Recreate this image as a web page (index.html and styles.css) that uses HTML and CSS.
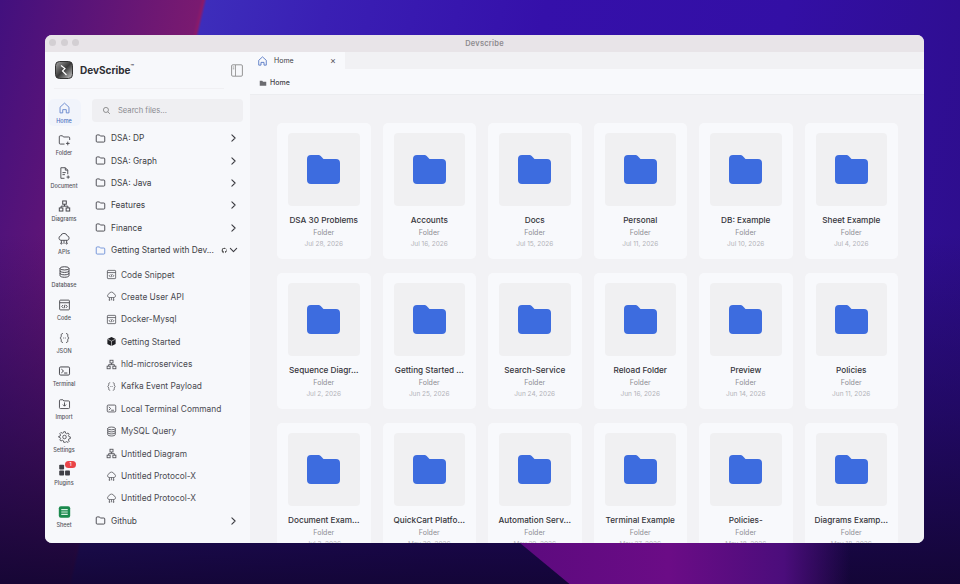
FILE: index.html
```html
<!DOCTYPE html>
<html lang="en">
<head>
<meta charset="utf-8">
<title>DevScribe</title>
<link rel="stylesheet" href="styles.css">
</head>
<body>
<svg class="defs" width="0" height="0" aria-hidden="true">
  <symbol id="i-folder" viewBox="0 0 16 16"><path d="M1.8 4.2a1.4 1.4 0 0 1 1.4-1.4h2.6c.5 0 .9.2 1.2.6l.8 1h5a1.4 1.4 0 0 1 1.4 1.4v6a1.4 1.4 0 0 1-1.4 1.4H3.2a1.4 1.4 0 0 1-1.4-1.4z" fill="none" stroke="currentColor" stroke-width="1.3"/></symbol>
  <symbol id="i-chev" viewBox="0 0 10 10"><path d="M3.2 1.5 6.8 5 3.2 8.5" fill="none" stroke="currentColor" stroke-width="1.2" stroke-linecap="round" stroke-linejoin="round"/></symbol>
  <symbol id="i-code" viewBox="0 0 16 16"><g fill="none" stroke="currentColor" stroke-width="1.1"><rect x="2" y="2" width="12" height="12" rx="1"/><path d="M2 5.2h12M6.3 8 4.6 9.8l1.7 1.8M9.7 8l1.7 1.8-1.7 1.8M8.6 7.6l-1.2 4.4"/></g></symbol>
  <symbol id="i-api" viewBox="0 0 16 16"><g fill="none" stroke="currentColor" stroke-width="1"><path d="M4.5 9.5a2.6 2.6 0 0 1-.3-5.1 3.9 3.9 0 0 1 7.5 0 2.6 2.6 0 0 1 .1 5.1z"/><path d="M5 9.5v2.8M8 9.5v4M11 9.5v2.8"/><circle cx="5" cy="13" r=".8"/><circle cx="11" cy="13" r=".8"/></g></symbol>
  <symbol id="i-tree" viewBox="0 0 16 16"><g fill="none" stroke="currentColor" stroke-width="1.2"><rect x="5.8" y="1.8" width="4.4" height="4"/><rect x="1.6" y="10.4" width="4.4" height="3.8"/><rect x="10" y="10.4" width="4.4" height="3.8"/><path d="M8 5.8v2.4M3.8 10.4V8.2h8.4v2.2"/></g></symbol>
  <symbol id="i-json" viewBox="0 0 16 16"><path d="M5.5 2.5c-1.8 0-1.500 1.400-1.500 2.800S3.600 7.500 2.400 8c1.200.5 1.600 1.300 1.600 2.700s-.3 2.800 1.500 2.800M10.500 2.500c1.800 0 1.500 1.400 1.500 2.800s.4 2.200 1.600 2.700c-1.200.5-1.600 1.300-1.600 2.700s.3 2.800-1.500 2.800M7 8h.01M9 8h.01" fill="none" stroke="currentColor" stroke-width="1.100" stroke-linecap="round"/></symbol>
  <symbol id="i-term" viewBox="0 0 16 16"><g fill="none" stroke="currentColor" stroke-width="1.200"><rect x="1.800" y="3" width="12.400" height="10" rx="1.500"/><path d="m4.500 6 2.300 2-2.300 2M8 10.500h3" stroke-linecap="round"/></g></symbol>
  <symbol id="i-db" viewBox="0 0 16 16"><g fill="none" stroke="currentColor" stroke-width="1.200"><ellipse cx="8" cy="3.500" rx="5.500" ry="2"/><path d="M2.500 3.500v9c0 1.100 2.500 2 5.500 2s5.500-.9 5.500-2v-9M2.500 6.500c0 1.100 2.500 2 5.500 2s5.500-.9 5.500-2M2.500 9.500c0 1.100 2.500 2 5.500 2s5.500-.9 5.500-2"/></g></symbol>
  <symbol id="i-big" viewBox="0 0 33 29"><path d="M0 4a4 4 0 0 1 4-4h7c1.500 0 2.600.6 3.400 1.700L16.500 4H29a4 4 0 0 1 4 4v17a4 4 0 0 1-4 4H4a4 4 0 0 1-4-4z"/></symbol>
</svg>

<div class="window">
  <header class="titlebar">
    <div class="lights"><i></i><i></i><i></i></div>
    <span class="title-text">Devscribe</span>
  </header>
  <div class="body">
    <aside class="sidebar">
      <div class="brand">
        <svg class="logo" viewBox="0 0 18 18"><defs><linearGradient id="lg" x1="0" y1="0" x2="1" y2="1"><stop offset="0" stop-color="#a8a8a8"/><stop offset=".5" stop-color="#3a3a3a"/><stop offset="1" stop-color="#d0d0d0"/></linearGradient></defs><rect x=".5" y=".5" width="17" height="17" rx="4" fill="url(#lg)" stroke="#333"/><path d="M6 4.500 10 7.500 7.500 10l4 4" fill="none" stroke="#fff" stroke-width="1.200"/></svg>
        <span class="brand-name">DevScribe<sup>™</sup></span>
        <svg class="panel-toggle" viewBox="0 0 12 13"><rect x=".6" y=".8" width="10.800" height="11.400" rx="1.200" fill="none" stroke="#8a8a8a" stroke-width=".9"/><path d="M4.500 1v11M1.800 3h1.500M1.800 4.800h1.500" stroke="#8a8a8a" stroke-width=".8"/></svg>
      </div>
      <div class="side-main">
        <nav class="rail">
          <a class="rail-item active"><svg viewBox="0 0 16 16"><path d="M2.500 7 8 2l5.500 5v7h-3.300v-4H5.800v4H2.500z" fill="none" stroke="currentColor" stroke-width="1.100" stroke-linejoin="round"/></svg><span>Home</span></a>
          <a class="rail-item"><svg viewBox="0 0 16 16"><path d="M8 13H2.800a1.200 1.200 0 0 1-1.200-1.200V4a1.200 1.200 0 0 1 1.200-1.200h2.700l1.200 1.500h6.500a1.200 1.200 0 0 1 1.200 1.200V8M12 10v4.500M9.800 12.200h4.500" fill="none" stroke="currentColor" stroke-width="1.100"/></svg><span>Folder</span></a>
          <a class="rail-item"><svg viewBox="0 0 16 16"><path d="M8 14.500H3.500v-13h5.500l3 3v5M9 1.500v3h3M5.500 7.500h4M5.500 10h3M12.500 11v4M10.500 13h4" fill="none" stroke="currentColor" stroke-width="1.100"/></svg><span>Document</span></a>
          <a class="rail-item"><svg viewBox="0 0 16 16"><use href="#i-tree"/></svg><span>Diagrams</span></a>
          <a class="rail-item apis"><svg viewBox="0 0 16 16"><use href="#i-api"/></svg><span>APIs</span></a>
          <a class="rail-item"><svg viewBox="0 0 16 16"><use href="#i-db"/></svg><span>Database</span></a>
          <a class="rail-item"><svg viewBox="0 0 16 16"><use href="#i-code"/></svg><span>Code</span></a>
          <a class="rail-item"><svg viewBox="0 0 16 16"><use href="#i-json"/></svg><span>JSON</span></a>
          <a class="rail-item"><svg viewBox="0 0 16 16"><use href="#i-term"/></svg><span>Terminal</span></a>
          <a class="rail-item"><svg viewBox="0 0 16 16"><path d="M1.800 4a1.200 1.200 0 0 1 1.200-1.200h3l1.200 1.400H13a1.200 1.200 0 0 1 1.200 1.200v7a1.200 1.200 0 0 1-1.200 1.200H3a1.200 1.200 0 0 1-1.200-1.200zM8 6v4.500M6 8.700l2 2 2-2" fill="none" stroke="currentColor" stroke-width="1.100"/></svg><span>Import</span></a>
          <a class="rail-item"><svg viewBox="0 0 16 16"><g fill="none" stroke="currentColor" stroke-width="1"><circle cx="8" cy="8" r="2.200"/><path d="M7 1.500h2l.4 1.900 1.300.6 1.700-1 1.400 1.500-1 1.600.6 1.400 1.800.4v2l-1.800.4-.6 1.400 1 1.600-1.400 1.400-1.700-1-1.300.6L9 14.500H7l-.4-1.900-1.300-.6-1.700 1-1.400-1.400 1-1.600-.6-1.400-1.800-.4V7.300l1.800-.4.600-1.400-1-1.600 1.400-1.500 1.700 1 1.300-.6z"/></g></svg><span>Settings</span></a>
          <a class="rail-item plugin"><svg viewBox="0 0 16 16"><g fill="#3f3f46"><rect x="1.500" y="1.500" width="6" height="6" rx="1"/><rect x="1.500" y="8.700" width="6" height="6" rx="1"/><rect x="8.700" y="8.700" width="6" height="6" rx="1"/></g></svg><b class="badge">1</b><span>Plugins</span></a>
          <a class="rail-item sheet"><svg viewBox="0 0 16 16"><rect x="1" y="1" width="14" height="14" rx="2.500" fill="#1c8a4e"/><path d="M4 5h8M4 8h8M4 11h8" stroke="#d5efe0" stroke-width="1.500"/></svg><span>Sheet</span></a>
          <i class="rail-dot"></i>
        </nav>
        <div class="explorer">
          <label class="search">
            <svg viewBox="0 0 16 16"><circle cx="7" cy="7" r="4.500" fill="none" stroke="#666" stroke-width="1.200"/><path d="m10.500 10.500 3.500 3.500" stroke="#666" stroke-width="1.200"/></svg>
            <span>Search files...</span>
          </label>
          <ul class="tree">
            <li class="folder"><svg class="fi"><use href="#i-folder"/></svg><span class="nm">DSA: DP</span><svg class="ch"><use href="#i-chev"/></svg></li>
            <li class="folder"><svg class="fi"><use href="#i-folder"/></svg><span class="nm">DSA: Graph</span><svg class="ch"><use href="#i-chev"/></svg></li>
            <li class="folder"><svg class="fi"><use href="#i-folder"/></svg><span class="nm">DSA: Java</span><svg class="ch"><use href="#i-chev"/></svg></li>
            <li class="folder"><svg class="fi"><use href="#i-folder"/></svg><span class="nm">Features</span><svg class="ch"><use href="#i-chev"/></svg></li>
            <li class="folder"><svg class="fi"><use href="#i-folder"/></svg><span class="nm">Finance</span><svg class="ch"><use href="#i-chev"/></svg></li>
            <li class="folder open"><svg class="fi"><use href="#i-folder"/></svg><span class="nm">Getting Started with Dev...</span>
              <svg class="gh" viewBox="0 0 16 16"><path d="M8 1.500a6.500 6.500 0 0 0-2 12.700c.3 0 .4-.1.400-.3v-1.800c-1.800.4-2.200-.8-2.200-.8-.3-.8-.7-1-.7-1-.6-.4 0-.4 0-.4.600 0 1 .7 1 .7.600 1 1.500.7 1.900.5 0-.4.200-.7.400-.9-1.400-.2-3-.7-3-3.200 0-.7.300-1.300.7-1.700-.1-.2-.3-.8 0-1.700 0 0 .6-.2 1.800.7a6 6 0 0 1 3.200 0c1.200-.9 1.800-.7 1.800-.7.300.9.100 1.500 0 1.700.4.400.7 1 .7 1.700 0 2.500-1.500 3-3 3.200.2.200.4.600.4 1.200v1.800c0 .2.100.3.400.3A6.500 6.500 0 0 0 8 1.500z" fill="#333"/></svg>
              <svg class="ch down"><use href="#i-chev"/></svg></li>
            <li class="file first"><svg class="ti"><use href="#i-code"/></svg><span>Code Snippet</span></li>
            <li class="file"><svg class="ti"><use href="#i-api"/></svg><span>Create User API</span></li>
            <li class="file"><svg class="ti"><use href="#i-code"/></svg><span>Docker-Mysql</span></li>
            <li class="file"><svg class="ti" viewBox="0 0 16 16"><path d="M8 1.500 14 4.500v7L8 14.500 2 11.500v-7z" fill="#1f1f23"/><path d="M2 4.500 8 7.500l6-3M8 7.500v7" stroke="#fff" stroke-width=".8" fill="none"/></svg><span>Getting Started</span></li>
            <li class="file"><svg class="ti"><use href="#i-tree"/></svg><span>hld-microservices</span></li>
            <li class="file"><svg class="ti"><use href="#i-json"/></svg><span>Kafka Event Payload</span></li>
            <li class="file"><svg class="ti"><use href="#i-term"/></svg><span>Local Terminal Command</span></li>
            <li class="file"><svg class="ti"><use href="#i-db"/></svg><span>MySQL Query</span></li>
            <li class="file"><svg class="ti"><use href="#i-tree"/></svg><span>Untitled Diagram</span></li>
            <li class="file"><svg class="ti"><use href="#i-api"/></svg><span>Untitled Protocol-X</span></li>
            <li class="file"><svg class="ti"><use href="#i-api"/></svg><span>Untitled Protocol-X</span></li>
            <li class="folder"><svg class="fi"><use href="#i-folder"/></svg><span class="nm">Github</span><svg class="ch"><use href="#i-chev"/></svg></li>
          </ul>
        </div>
      </div>
    </aside>
    <main class="content">
      <div class="tabs">
        <div class="tab">
          <svg viewBox="0 0 16 16"><path d="M2.500 7 8 2l5.500 5v7h-3.300v-4H5.800v4H2.500z" fill="none" stroke="#4a6fc0" stroke-width="1.200" stroke-linejoin="round"/></svg>
          <span>Home</span><em>×</em>
        </div>
      </div>
      <div class="crumbs">
        <svg viewBox="0 0 16 16"><path d="M1.500 3.500h5l1.500 2h6.500v8h-13z" fill="#6b6b70"/></svg>
        <span>Home</span>
      </div>
      <div class="grid">
        <article class="card"><div class="thumb"><svg><use href="#i-big"/></svg></div><h3>DSA 30 Problems</h3><p>Folder</p><time>Jul 28, 2026</time></article>
        <article class="card"><div class="thumb"><svg><use href="#i-big"/></svg></div><h3>Accounts</h3><p>Folder</p><time>Jul 16, 2026</time></article>
        <article class="card"><div class="thumb"><svg><use href="#i-big"/></svg></div><h3>Docs</h3><p>Folder</p><time>Jul 15, 2026</time></article>
        <article class="card"><div class="thumb"><svg><use href="#i-big"/></svg></div><h3>Personal</h3><p>Folder</p><time>Jul 11, 2026</time></article>
        <article class="card"><div class="thumb"><svg><use href="#i-big"/></svg></div><h3>DB: Example</h3><p>Folder</p><time>Jul 10, 2026</time></article>
        <article class="card"><div class="thumb"><svg><use href="#i-big"/></svg></div><h3>Sheet Example</h3><p>Folder</p><time>Jul 4, 2026</time></article>
        <article class="card"><div class="thumb"><svg><use href="#i-big"/></svg></div><h3>Sequence Diagr...</h3><p>Folder</p><time>Jul 2, 2026</time></article>
        <article class="card"><div class="thumb"><svg><use href="#i-big"/></svg></div><h3>Getting Started ...</h3><p>Folder</p><time>Jun 25, 2026</time></article>
        <article class="card"><div class="thumb"><svg><use href="#i-big"/></svg></div><h3>Search-Service</h3><p>Folder</p><time>Jun 24, 2026</time></article>
        <article class="card"><div class="thumb"><svg><use href="#i-big"/></svg></div><h3>Reload Folder</h3><p>Folder</p><time>Jun 16, 2026</time></article>
        <article class="card"><div class="thumb"><svg><use href="#i-big"/></svg></div><h3>Preview</h3><p>Folder</p><time>Jun 14, 2026</time></article>
        <article class="card"><div class="thumb"><svg><use href="#i-big"/></svg></div><h3>Policies</h3><p>Folder</p><time>Jun 11, 2026</time></article>
        <article class="card"><div class="thumb"><svg><use href="#i-big"/></svg></div><h3>Document Exam...</h3><p>Folder</p><time>Jul 3, 2026</time></article>
        <article class="card"><div class="thumb"><svg><use href="#i-big"/></svg></div><h3>QuickCart Platfo...</h3><p>Folder</p><time>May 30, 2026</time></article>
        <article class="card"><div class="thumb"><svg><use href="#i-big"/></svg></div><h3>Automation Serv...</h3><p>Folder</p><time>May 29, 2026</time></article>
        <article class="card"><div class="thumb"><svg><use href="#i-big"/></svg></div><h3>Terminal Example</h3><p>Folder</p><time>May 27, 2026</time></article>
        <article class="card"><div class="thumb"><svg><use href="#i-big"/></svg></div><h3>Policies-</h3><p>Folder</p><time>May 18, 2026</time></article>
        <article class="card"><div class="thumb"><svg><use href="#i-big"/></svg></div><h3>Diagrams Examp...</h3><p>Folder</p><time>May 18, 2026</time></article>
      </div>
    </main>
  </div>
</div>
</body>
</html>
```

FILE: styles.css
```css
* { box-sizing: border-box; }
html, body { margin: 0; height: 584px; overflow: hidden; }
body {
  font-family: Inter, "Liberation Sans", sans-serif;
  color: #2b2b30;
  padding: 35px 36px 41px 45px;
  background: linear-gradient(103deg, #42107e 0, #5a1478 8%, #7a1a70 18.300%, #8a1a6a 18.600%, #3d2dbb 18.900%, #3a1fb4 30%, #3510aa 50%, #330fa5 72%, #2c0d85 100%);
}
.defs { position: absolute; }
body::before {
  content: "";
  position: absolute;
  inset: 0;
  background: linear-gradient(180deg, transparent 0 40%, rgba(24,6,70,.55) 70%, rgba(18,5,50,.95) 100%);
  pointer-events: none;
}
body::after {
  content: "";
  position: absolute;
  left: 520px;
  bottom: 0;
  width: 330px;
  height: 41px;
  background: linear-gradient(90deg, #5c0a7e, #6b0c86 45%, #4b0d7b 80%, transparent);
  clip-path: polygon(0 0, 100% 0, 100% 100%, 15% 100%);
  pointer-events: none;
}
.window {
  position: relative;
  z-index: 1;
  height: 508px;
  border-radius: 7px;
  background: #f7f8fb;
  overflow: hidden;
  display: flex;
  flex-direction: column;
}
.titlebar {
  height: 17px;
  flex: none;
  background: #e8e4e8;
  display: flex;
  align-items: center;
  justify-content: center;
  position: relative;
}
.lights { position: absolute; left: 4px; top: 4px; display: flex; gap: 4.500px; }
.lights i { width: 7px; height: 7px; border-radius: 50%; background: #d3cfd3; }
.title-text { font-size: 7.500px; font-weight: 600; color: #8e8b8f; letter-spacing: .2px; }
.body { flex: 1; display: flex; min-height: 0; }

.sidebar { width: 205px; flex: none; background: #f7f8fb; display: flex; flex-direction: column; }
.brand {
  height: 37px;
  flex: none;
  margin: 0 26px 0 9px;
  padding: 0 0 0 1px;
  display: flex;
  align-items: center;
  gap: 7px;
  border-bottom: 1px solid #f0f0f3;
}
.logo { width: 18px; height: 18px; flex: none; }
.brand-name { font-size: 10px; font-weight: 700; color: #2e2e33; flex: 1; }
.brand-name sup { font-size: 5.500px; line-height: 0; font-weight: 600; vertical-align: 5px; }
.panel-toggle { width: 12px; height: 13px; flex: none; margin-right: -19px; }
.side-main { flex: 1; display: flex; min-height: 0; padding-top: 10px; }
.rail { width: 47px; flex: none; padding-right: 9px; margin-top: -.5px; display: flex; flex-direction: column; align-items: center; position: relative; }
.rail-item {
  width: 36px;
  height: 32.950px;
  flex: none;
  display: flex;
  flex-direction: column;
  align-items: center;
  position: relative;
  color: #44444a;
  padding-top: 2px;
  border-radius: 6px;
}
.rail-item svg { width: 13px; height: 14px; display: block; flex: none; }
.rail-item.apis svg { width: 16px; height: 14px; }
.rail-item span { font-size: 5.500px; line-height: 7px; font-weight: 500; margin-top: 3px; white-space: nowrap; color: #55555c; }
.rail-item.active { color: #6384cc; background: #f1f4fb; height: 27px; margin-bottom: 5.950px; width: 33px; }
.rail-item.active span { color: #4a6fc0; }
.rail-item.sheet { margin-top: 9.500px; }
.badge {
  position: absolute;
  top: 0;
  left: 19px;
  width: 11px;
  height: 7px;
  border-radius: 4px;
  background: #ea4448;
  color: #fff;
  font-size: 5px;
  line-height: 7px;
  text-align: center;
  font-weight: 500;
}
.rail-dot { position: absolute; left: 18px; top: 451px; width: 1px; height: 1px; background: #555; }

.explorer { flex: 1; min-width: 0; padding: 0 7px 0 0; }
.search {
  height: 23px;
  background: #efeff2;
  border-radius: 4px;
  display: flex;
  align-items: center;
  padding-left: 10px;
  gap: 7px;
  font-size: 7.600px;
  color: #8a8a90;
  margin-bottom: 5px;
}
.search svg { width: 9px; height: 9px; }
.tree { list-style: none; margin: 0; padding: 0; font-size: 8.350px; color: #3d3d44; }
.tree li { height: 22.400px; display: flex; align-items: center; white-space: nowrap; }
.folder { padding: 0 5px 0 3px; }
.fi { width: 11px; height: 11px; margin-right: 5px; color: #3e3e44; flex: none; }
.folder .nm { flex: 1; }
.ch { width: 9px; height: 10px; color: #3e3e44; flex: none; }
.ch.down { transform: rotate(90deg); margin-left: 1px; }
.gh { width: 7px; height: 7px; flex: none; }
.folder.open .fi { color: #6b8fd6; }
.file { padding-left: 14px; color: #4a4a51; }
.tree li.first { height: 24.400px; padding-top: 2px; }
.ti { width: 11px; height: 11px; margin-right: 4px; flex: none; color: #4a4a50; }

.content { flex: 1; min-width: 0; background: #f2f2f5; display: flex; flex-direction: column; }
.tabs { height: 17px; flex: none; background: #f1f1f4; display: flex; }
.tab {
  width: 95px;
  background: #f8f9fc;
  display: flex;
  align-items: center;
  padding: 0 9px 0 7px;
  gap: 6px;
  font-size: 7px;
  color: #3e3e44;
}
.tab svg { width: 11px; height: 12px; }
.tab span { flex: 1; }
.tab em { font-style: normal; font-size: 9px; color: #55555a; }
.crumbs {
  height: 26px;
  flex: none;
  padding: 2px 0 0 9px;
  background: #f8f9fc;
  border-bottom: 1px solid #ecedf0;
  display: flex;
  align-items: center;
  gap: 3px;
  font-size: 7px;
  font-weight: 500;
  color: #44444a;
}
.crumbs svg { width: 8px; height: 8px; }
.grid {
  flex: 1;
  padding: 28px 26px 0 27px;
  display: grid;
  grid-template-columns: repeat(6, 1fr);
  grid-auto-rows: 136px;
  gap: 14px 12px;
  overflow: hidden;
}
.card {
  background: #f8f9fc;
  border-radius: 5px;
  padding: 10px 11px 0;
  display: flex;
  flex-direction: column;
  align-items: center;
  text-align: center;
}
.thumb {
  width: 100%;
  height: 73px;
  flex: none;
  background: #f0f0f2;
  border-radius: 4px;
  display: flex;
  align-items: center;
  justify-content: center;
}
.thumb svg { width: 33px; height: 29px; fill: #3d6cdf; }
.card h3 { margin: 9px -6px 0; font-size: 8.200px; line-height: 11px; font-weight: 500; color: #34343a; white-space: nowrap; }
.card p { margin: 2px 0 0; font-size: 7px; line-height: 10px; color: #8c8c92; }
.card time { margin-top: 2px; font-size: 6.500px; line-height: 9px; color: #b2b2b8; }
```
